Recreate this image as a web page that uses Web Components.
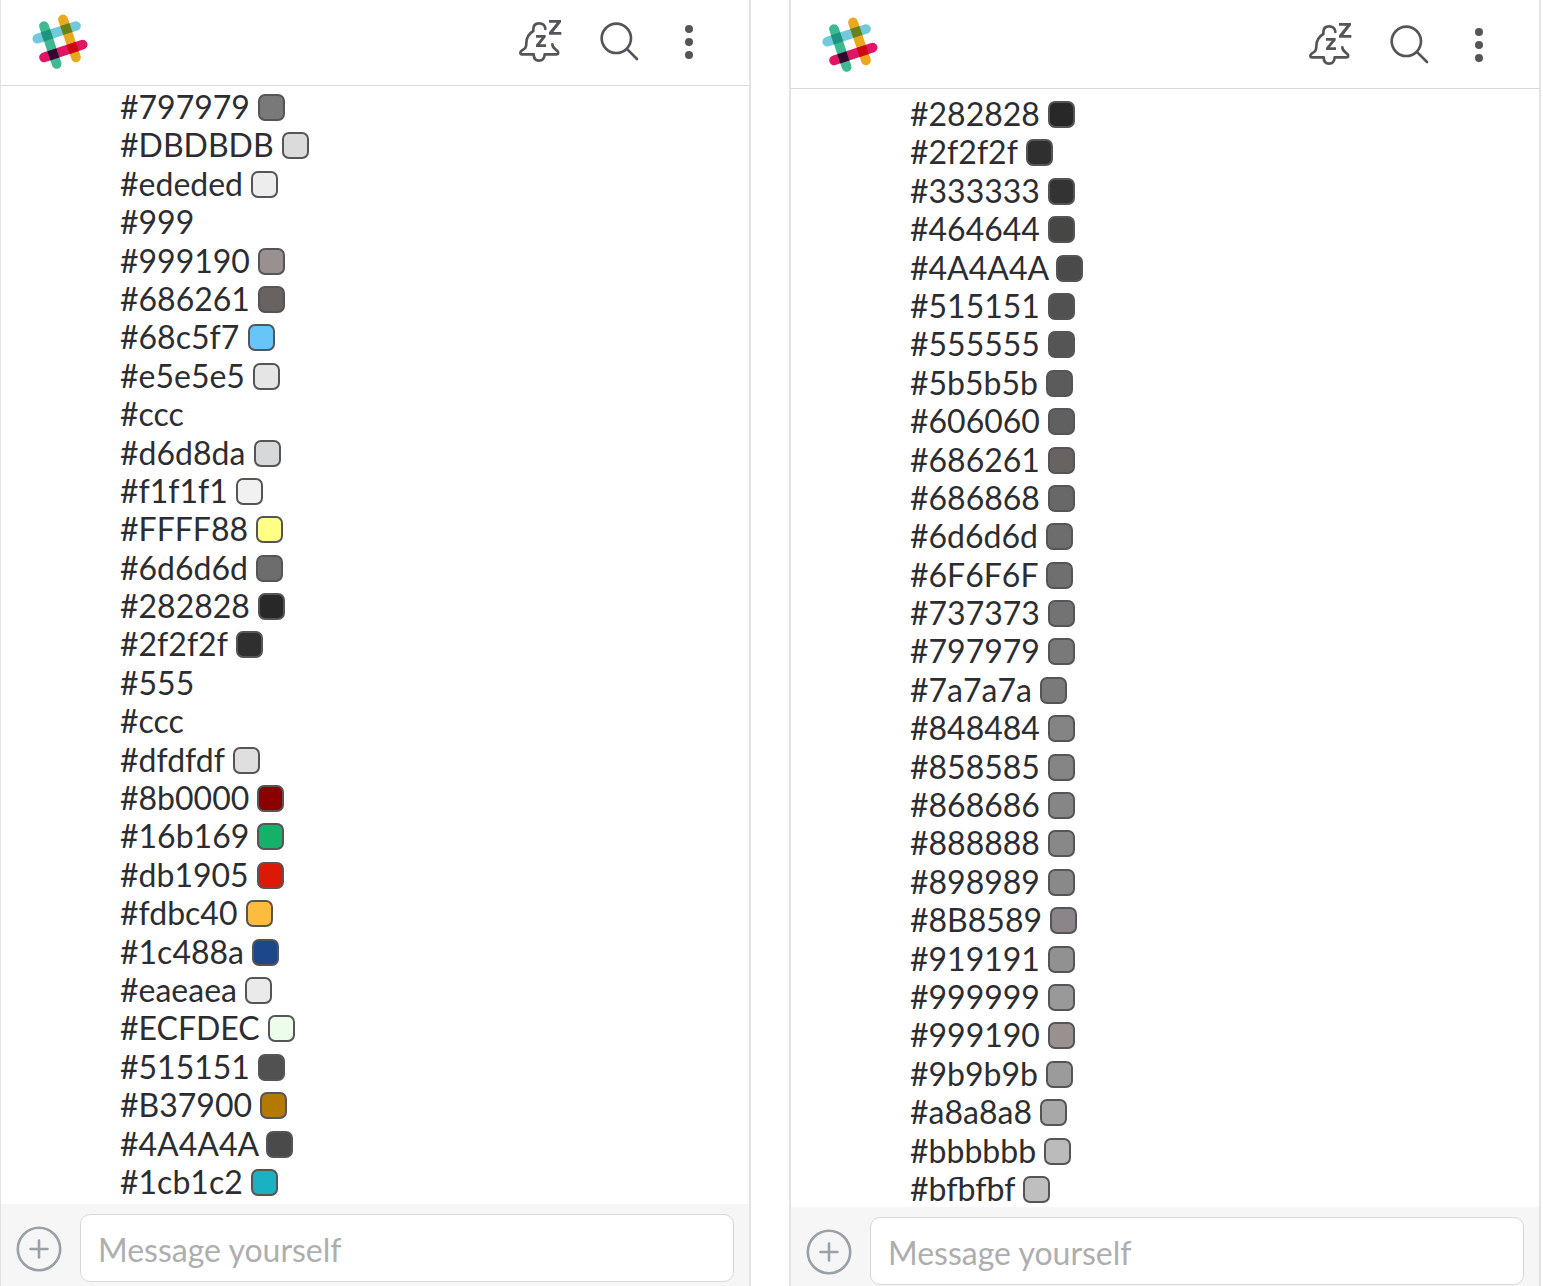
<!DOCTYPE html>
<html lang="en">
<head>
<meta charset="utf-8">
<title>Colour notes</title>
<style>
  body { margin: 0; background: #fff; color: #2c2d30; font-family: Lato, "Liberation Sans", sans-serif; font-size: 32px; line-height: 1.2; }
</style>
</head>
<body>
<chat-compare></chat-compare>

<script>
class BrandLogo extends HTMLElement {
  constructor() {
    super();
    this.attachShadow({ mode: 'open' }).innerHTML = `
      <style>
        :host { display: block; width: 56px; height: 56px; }
        svg { display: block; }
      </style>
      <svg width="56" height="56" viewBox="96 42 168 168" aria-hidden="true">
        <g fill="none" stroke-width="29" stroke-linecap="round">
          <path stroke="#70cadb" d="M112 116 228 78"/>
          <path stroke="#e9a820" d="M189 58 228 172"/>
          <path stroke="#e01563" d="M132 172 248 134"/>
          <path stroke="#3eb991" d="M132 78 170 192"/>
        </g>
        <rect x="-14.5" y="-14.5" width="29" height="29" fill="#1e9480" transform="translate(141 106) rotate(-18.3)"/>
        <rect x="-14.5" y="-14.5" width="29" height="29" fill="#66831b" transform="translate(199 87) rotate(-18.3)"/>
        <rect x="-14.5" y="-14.5" width="29" height="29" fill="#36072e" transform="translate(160 163) rotate(-18.3)"/>
        <rect x="-14.5" y="-14.5" width="29" height="29" fill="#cb0a10" transform="translate(218 144) rotate(-18.3)"/>
      </svg>`;
  }
}
customElements.define('brand-logo', BrandLogo);

const ICONS = {
  snooze: { label: 'Notifications snoozed', width: 48, box: '48 42 144 168', art: `
    <g fill="none" stroke="#555459" stroke-width="8" stroke-linecap="round" stroke-linejoin="round">
      <path d="M136 87C136 76 128 70 117 70C106 70 100 77 100 88V93C86 101 79 112 79 130C79 143 76 145 66 151C59 156 60 163 66 163H101C101 175 107 182 117 182C127 182 134 175 134 163H168C176 163 177 156 170 151C163 146 157 143 157 133"/>
    </g>
    <g fill="#555459">
      <path d="M147 60H183V67L160 96H184V104H147V97L170 68H147Z"/>
      <path d="M108 105H137V112L120 133H138V141H108V134L125 113H108Z"/>
    </g>` },
  search: { label: 'Search', width: 48, box: '288 42 144 168', art: `
    <g fill="none" stroke="#555459" stroke-width="8" stroke-linecap="round">
      <circle cx="349" cy="115" r="44"/>
      <path d="M382 148 411 177"/>
    </g>` },
  more: { label: 'More', width: 26, box: '528 42 78 168', art: `
    <g fill="#555459">
      <circle cx="567" cy="87" r="12"/><circle cx="567" cy="126" r="12"/><circle cx="567" cy="165" r="12"/>
    </g>` }
};

class IconButton extends HTMLElement {
  connectedCallback() {
    const icon = ICONS[this.getAttribute('icon')];
    this.attachShadow({ mode: 'open' }).innerHTML = `
      <style>
        :host { display: block; }
        button { display: block; margin: 0; padding: 0; border: 0; background: none; cursor: pointer; }
        svg { display: block; }
      </style>
      <button type="button" aria-label="${icon.label}">
        <svg width="${icon.width}" height="56" viewBox="${icon.box}" aria-hidden="true">${icon.art}</svg>
      </button>`;
  }
}
customElements.define('icon-button', IconButton);

class ChatHeader extends HTMLElement {
  constructor() {
    super();
    this.attachShadow({ mode: 'open' }).innerHTML = `
      <style>
        :host { display: block; border-bottom: 1px solid #d8d8d8; }
        header { display: flex; justify-content: space-between; padding: var(--header-top, 14px) 47px 15px 31px; }
        nav { display: flex; gap: 32px; }
      </style>
      <header>
        <brand-logo></brand-logo>
        <nav>
          <icon-button icon="snooze"></icon-button>
          <icon-button icon="search"></icon-button>
          <icon-button icon="more"></icon-button>
        </nav>
      </header>`;
  }
}
customElements.define('chat-header', ChatHeader);

class ColorLine extends HTMLElement {
  connectedCallback() {
    this.attachShadow({ mode: 'open' }).innerHTML = `
      <style>
        :host { display: block; white-space: nowrap; }
        i { display: inline-block; box-sizing: border-box; width: 27px; height: 27px;
            border: 2px solid #555459; border-radius: 7px; vertical-align: -2px; line-height: 0; }
      </style>
      <slot></slot>`;
    const value = this.textContent.trim();
    // Only six-digit values get a preview chip.
    if (value.length === 7) {
      const chip = document.createElement('i');
      chip.style.backgroundColor = value;
      this.shadowRoot.append(chip);
    }
  }
}
customElements.define('color-line', ColorLine);

class MessageComposer extends HTMLElement {
  constructor() {
    super();
    this.attachShadow({ mode: 'open' }).innerHTML = `
      <style>
        :host { display: block; background: #f6f6f6; }
        form { display: flex; align-items: center; gap: 18px; margin: 0; padding: 10px 15px var(--composer-bottom, 4px); }
        button { flex: none; margin: 0; padding: 0; border: 0; background: none; cursor: pointer; }
        svg { display: block; }
        input { flex: 1; min-width: 0; box-sizing: border-box; height: 68px; margin: 0; padding: 2px 17px 0;
                border: 1px solid #d8d8d8; border-radius: 10px; background: #fff; color: #2c2d30; font: inherit; outline: 0; }
        input::placeholder { color: #aeaeae; opacity: 1; }
      </style>
      <form>
        <button type="button" aria-label="Add">
          <svg width="46" height="48" viewBox="0 0 46 48" fill="none" stroke="#9aa0a8" aria-hidden="true">
            <circle cx="23" cy="25" r="21.2" stroke-width="2.6"/>
            <path d="M14.5 25h17M23 16.5v17" stroke-width="2.6" stroke-linecap="round"/>
          </svg>
        </button>
        <input type="text" placeholder="Message yourself" aria-label="Message yourself">
      </form>`;
  }
}
customElements.define('message-composer', MessageComposer);

class ChatPanel extends HTMLElement {
  connectedCallback() {
    this.attachShadow({ mode: 'open' }).innerHTML = `
      <style>
        :host { display: flex; flex-direction: column; min-width: 0; min-height: 0; box-sizing: border-box;
                border: 0 solid #e3e3e3; border-width: 0 2px 0 var(--edge, 1px); }
        main { flex: 1; min-height: 0; overflow: hidden; padding: var(--list-top, 2px) 20px 0 119px; }
      </style>
      <chat-header></chat-header>
      <main><slot></slot></main>
      <message-composer></message-composer>`;
  }
}
customElements.define('chat-panel', ChatPanel);

const ORIGINAL = `#797979 #DBDBDB #ededed #999 #999190 #686261 #68c5f7 #e5e5e5 #ccc #d6d8da #f1f1f1 #FFFF88 #6d6d6d
  #282828 #2f2f2f #555 #ccc #dfdfdf #8b0000 #16b169 #db1905 #fdbc40 #1c488a #eaeaea #ECFDEC #515151 #B37900
  #4A4A4A #1cb1c2`.split(/\s+/);
const SORTED = `#282828 #2f2f2f #333333 #464644 #4A4A4A #515151 #555555 #5b5b5b #606060 #686261 #686868 #6d6d6d
  #6F6F6F #737373 #797979 #7a7a7a #848484 #858585 #868686 #888888 #898989 #8B8589 #919191 #999999 #999190
  #9b9b9b #a8a8a8 #bbbbbb #bfbfbf`.split(/\s+/);
const lines = values => values.map(v => `<color-line>${v} </color-line>`).join('');

class ChatCompare extends HTMLElement {
  constructor() {
    super();
    this.attachShadow({ mode: 'open' }).innerHTML = `
      <style>
        :host { display: grid; grid-template-columns: 751fr 752fr; grid-template-rows: 100%; column-gap: 38px;
                box-sizing: border-box; height: 100vh; padding-right: 2px; overflow: hidden; }
        .sorted { --edge: 2px; --header-top: 17px; --list-top: 6px; --composer-bottom: 1px; }
      </style>
      <chat-panel>${lines(ORIGINAL)}</chat-panel>
      <chat-panel class="sorted">${lines(SORTED)}</chat-panel>`;
  }
}
customElements.define('chat-compare', ChatCompare);
</script>
</body>
</html>
